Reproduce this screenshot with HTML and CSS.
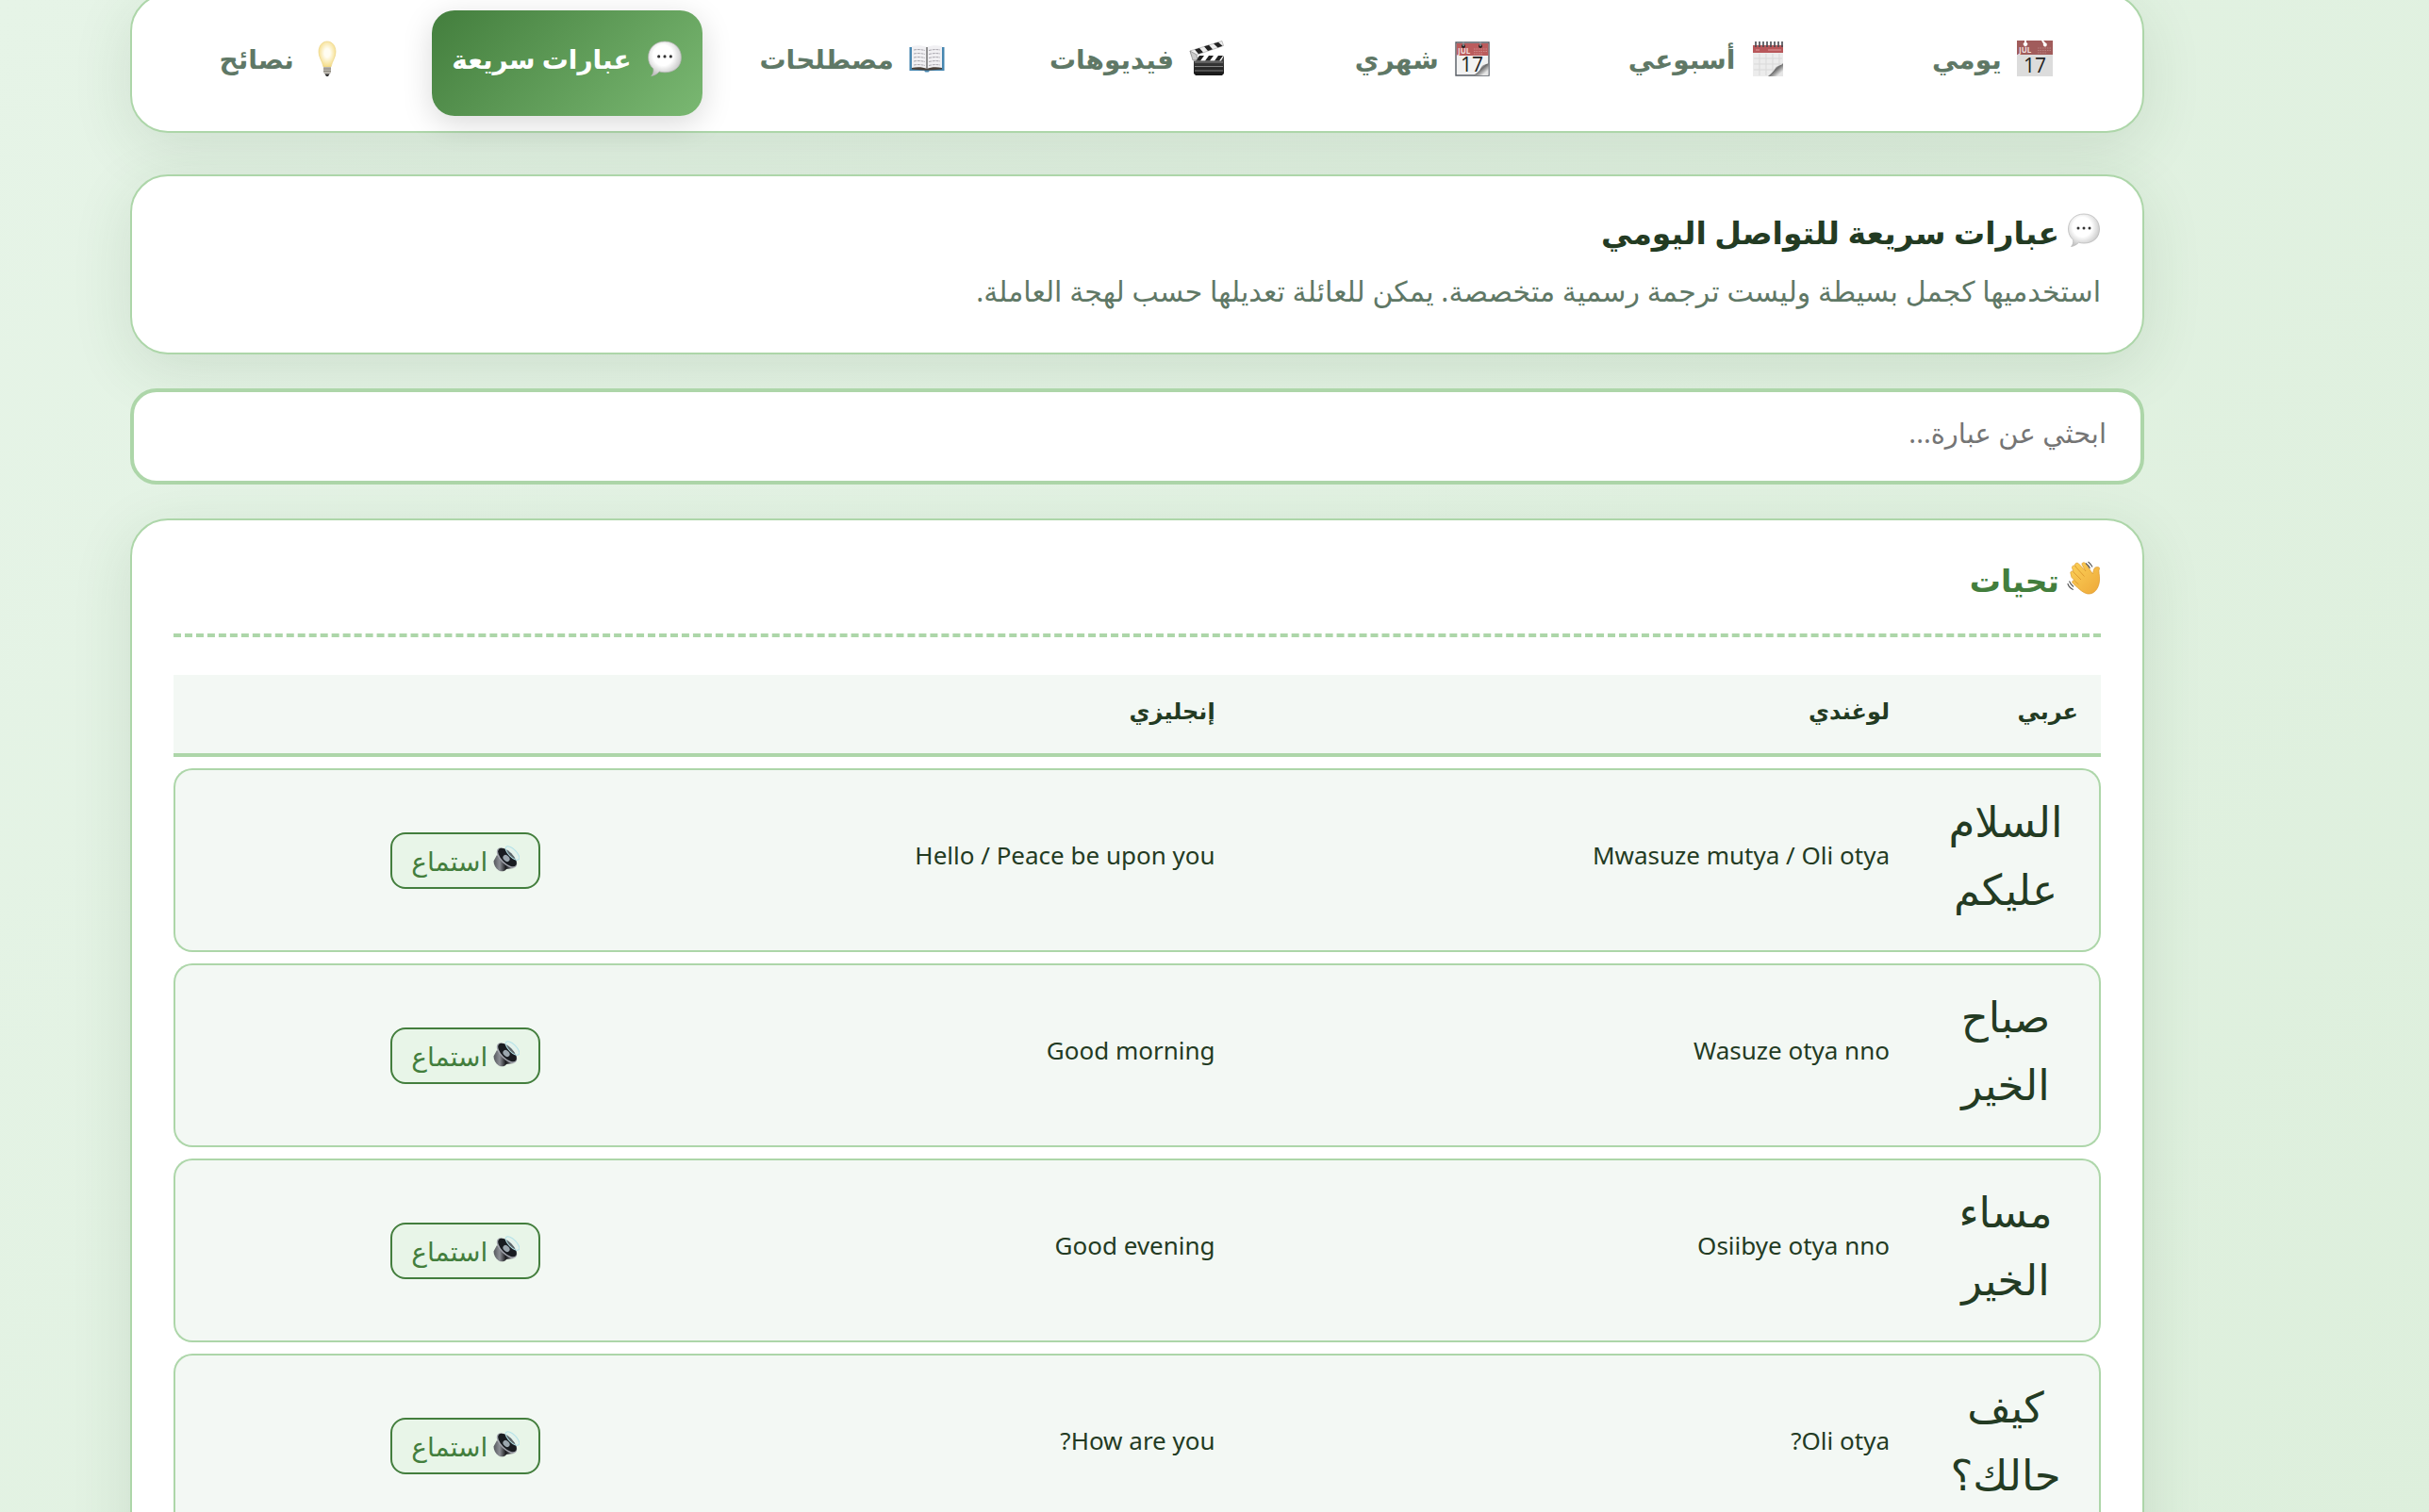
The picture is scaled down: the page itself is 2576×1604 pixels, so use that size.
FILE: index.html
```html
<!DOCTYPE html>
<html lang="ar" dir="rtl">
  <head>
    <meta charset="UTF-8" />
    <meta name="viewport" content="width=device-width, initial-scale=1.0" />
    <title>عبارات سريعة</title>
    <link rel="stylesheet" href="styles.css">
  </head>
  <body>
    <!-- Shared icons -->
    <svg class="sprite" aria-hidden="true">
      <defs>
        <radialGradient id="bubbleFill" cx="45%" cy="40%" r="60%">
          <stop offset="0.5" stop-color="#ffffff" />
          <stop offset="1" stop-color="#c4c4c4" />
        </radialGradient>
        <radialGradient id="bulbFill" cx="50%" cy="45%" r="55%">
          <stop offset="0.3" stop-color="#fffdf2" />
          <stop offset="1" stop-color="#f5dc85" />
        </radialGradient>
        <linearGradient id="handFill" x1="0" y1="0" x2="1" y2="1">
          <stop offset="0" stop-color="#fbd159" />
          <stop offset="1" stop-color="#eea838" />
        </linearGradient>
        <linearGradient id="curlFill" x1="0" y1="0" x2="1" y2="1">
          <stop offset="0.3" stop-color="#f4f4f4" />
          <stop offset="0.5" stop-color="#6c6c6c" />
          <stop offset="0.8" stop-color="#e6e6e6" />
        </linearGradient>
        <linearGradient id="boardFill" x1="0" y1="0" x2="0" y2="1">
          <stop offset="0" stop-color="#4a4a4a" />
          <stop offset="1" stop-color="#161616" />
        </linearGradient>
        <linearGradient id="magnetFill" x1="0" y1="0" x2="1" y2="0">
          <stop offset="0" stop-color="#55575d" />
          <stop offset="0.3" stop-color="#8d8f96" />
          <stop offset="0.6" stop-color="#1b1c1f" />
          <stop offset="1" stop-color="#8d8f96" />
        </linearGradient>

        <symbol id="icon-bubble" viewBox="0 0 36 36">
          <path d="M18 1C27.500 1 34.500 7.500 34.500 17S27.500 32 18 32c-2 0-3.800-.3-5.500-.8C11 33 7.500 35.300 4.500 35.500 6.500 33.500 7 31 6.500 28.300 3.300 25.500 1.500 21.600 1.500 17 1.500 7.500 8.500 1 18 1z" fill="url(#bubbleFill)" stroke="#b5b5b5" stroke-width="0.700" />
          <circle cx="12" cy="16" r="1.500" fill="#333" />
          <circle cx="18" cy="16" r="1.500" fill="#333" />
          <circle cx="24" cy="16" r="1.500" fill="#333" />
        </symbol>

        <symbol id="icon-day" viewBox="0 0 38 38">
          <path d="M0 0h38v38H0z" fill="#dcdcdc" />
          <path d="M0 0h38v15H0z" fill="#a15c5b" />
          <path d="M8 0h2v2a2.200 2.200 0 1 1-2 0zM26 0h2l2.500 2.500a2 2 0 1 1-2.500 1z" fill="#fff" />
          <path d="M22 8h14M22 10.500h14M22 13h10" stroke="#b98080" stroke-dasharray="1.500 1" fill="none" />
          <text x="2" y="13" class="cal-month">JUL</text>
          <text x="19" y="34" class="cal-date">17</text>
        </symbol>

        <symbol id="icon-week" viewBox="0 0 38 38">
          <path d="M3 5h32v21L24 38H3z" fill="#ececec" />
          <path d="M3 5h32v8H3z" fill="#b8575a" />
          <path d="M6 10h4M19 10h14" stroke="#d99" fill="none" />
          <path d="M10 14v23M17 14v23M24 14v20M31 14v14M4 19h30M4 25h30M4 31h24" stroke="#d9d9d9" fill="none" />
          <path d="M35 24c-2 3-6 2-8 5-2 4-5 6-8 9h16z" fill="url(#curlFill)" />
          <path d="M6 1v6M10 1v6M14 1v6M18 1v6M22 1v6M26 1v6M30 1v6M34 1v6" stroke="#47494f" stroke-width="1.600" fill="none" />
        </symbol>

        <symbol id="icon-month" viewBox="0 0 38 38">
          <path d="M2 2h35v35H2z" fill="#f2f2f2" stroke="#555b63" stroke-width="1.400" />
          <path d="M2.700 3h33.600v13H2.700z" fill="#bb5c5d" />
          <path d="M21 9h14M21 11.500h14M21 14h10" stroke="#d08a8a" stroke-dasharray="1.500 1" fill="none" />
          <path d="M36.500 24c-4 2-6 1-8 5-1.500 4-5 6-8 8h16z" fill="url(#curlFill)" />
          <text x="4" y="14" class="cal-month">JUL</text>
          <text x="19" y="33" class="cal-date">17</text>
          <circle cx="10" cy="6" r="2" fill="#222" />
          <circle cx="28" cy="6" r="2" fill="#222" />
          <path d="M10 1v5M28 1v5" stroke="#8b979c" stroke-width="1.500" />
        </symbol>

        <symbol id="icon-clapper" viewBox="0 0 38 38">
          <path d="M5 16h32v19l-2 2H7l-2-2z" fill="url(#boardFill)" />
          <path d="M6 23h30M6 27.500h30M6 32h30" stroke="#999" stroke-width="0.800" />
          <path d="M5 16h32l-3 5.500H5z" fill="#fff" />
          <path d="M11 16h5l-4 5.500H7zM21 16h5l-4 5.500h-5zM31 16h5l-4 5.500h-5z" fill="#222" />
          <path d="M1 11L35 0.500l1.500 5L3 17z" fill="#eee" stroke="#888" stroke-width="0.500" />
          <path d="M6 9.500l5-1.500 4 4.500-5 1.700zM16 6.300l5-1.500 4 4.500-5 1.600zM26 3.200l5-1.500 4.500 4-5 1.700z" fill="#222" />
          <path d="M1 11l7 4 1 5-5 1z" fill="#c9c9c9" stroke="#777" stroke-width="0.600" />
        </symbol>

        <symbol id="icon-book" viewBox="0 0 38 38">
          <path d="M0.500 7H37.500V32H22l-1.500 1.500h-3L16 32H0.500z" fill="#4686b0" />
          <path d="M3 28h32v2.500L22 31.500h-6L3 30.500z" fill="#4a4038" />
          <path d="M3 6c5-1.500 12-1 16 1 4-2 11-2.500 16-1v23c-5-1-12-1-16 1-4-2-11-2-16-1z" fill="#f1f0f3" />
          <path d="M19 7v23" stroke="#777" stroke-width="1.600" />
          <path d="M5 10c4-.8 8-.5 12 .5M5 14c4-.8 8-.5 12 .5M5 18c4-.8 8-.5 12 .5M5 22c4-.8 8-.5 12 .5M5 26c4-.8 8-.5 12 .5M21 10.500c4-1 8-1.300 12-.5M21 14.500c4-1 8-1.300 12-.5M21 18.500c4-1 8-1.300 12-.5M21 22.500c4-1 8-1.300 12-.5M21 26.500c4-1 8-1.300 12-.5" stroke="#a9a7ae" stroke-dasharray="3 0.800" fill="none" />
        </symbol>

        <symbol id="icon-bulb" viewBox="0 0 38 38">
          <path d="M19 1c5.500 0 9 4.800 9 11 0 6-3.500 9-5 16h-8C13.500 21 10 18 10 12 10 5.800 13.500 1 19 1z" fill="url(#bulbFill)" stroke="#ecd68a" stroke-width="0.700" />
          <path d="M15 28h8v6l-2 2h-4l-2-2z" fill="#b9b5ad" />
          <path d="M15 30h8M15 32.500h8" stroke="#807c74" stroke-width="0.800" />
          <path d="M16.500 35.500h5L20 38h-2z" fill="#333" />
        </symbol>

        <symbol id="icon-wave" viewBox="0 0 36 36">
          <path d="M4 13.500C3 11.500 5.500 10 7 11.500L5.500 7.500C5 5 8 4 9.500 6L8.500 4.500C8.500 2 11.500 1.500 13 3.500L20 11 16 4C15.500 1.500 18.500 1 20 3l7.500 11c.5-2.500.5-4.500 2-6.500 1.500-1.500 5.500-1 5 .5-1.500 3 .5 7 0 13C34 29 29 35.500 22.500 35 18 34.500 14 31 6.500 24 4.500 22 6.500 20 8.500 21L5 17.500z" fill="url(#handFill)" stroke="#dd9a2e" stroke-width="0.700" />
          <path d="M6.500 11.500L15 20M9 6l9.500 10.500M8.500 21.500l4 3.500" stroke="#d8922b" stroke-width="0.800" fill="none" />
          <path d="M20 2.500c2 1.500 3.500 3.500 4.500 5.500M22.500 1c2 1.500 3.500 3.500 4.500 5.500M.8 24c1 3 3.500 5.500 6 6.500M2.500 21.500c1 2.500 2.500 4.500 4.500 6" stroke="#555" stroke-width="1.100" fill="none" />
        </symbol>

        <symbol id="icon-speaker" viewBox="0 0 28 28">
          <path d="M4 10L22 24l-8 1c-1.500 2.500-5 3-8 1.500C2.500 24 .5 20 .5 16.500z" fill="url(#magnetFill)" />
          <ellipse cx="14.500" cy="13" rx="13.500" ry="6.800" transform="rotate(45 14.500 13)" fill="#a3a5ae" />
          <ellipse cx="15" cy="12.500" rx="12.500" ry="6" transform="rotate(45 15 12.500)" fill="#191c21" />
          <ellipse cx="14" cy="13.500" rx="4" ry="3" transform="rotate(45 14 13.500)" fill="#9ba6ae" />
          <ellipse cx="20.500" cy="8" rx="9.500" ry="4" transform="rotate(45 20.500 8)" fill="#d9eff2" fill-opacity="0.350" stroke="#b5e2e8" stroke-width="1" />
        </symbol>
      </defs>
    </svg>

    <main class="container">
      <nav class="tabs">
        <button class="tab" type="button"><svg class="tab-icon"><use href="#icon-day" /></svg>يومي</button>
        <button class="tab" type="button"><svg class="tab-icon"><use href="#icon-week" /></svg>أسبوعي</button>
        <button class="tab" type="button"><svg class="tab-icon"><use href="#icon-month" /></svg>شهري</button>
        <button class="tab" type="button"><svg class="tab-icon"><use href="#icon-clapper" /></svg>فيديوهات</button>
        <button class="tab" type="button"><svg class="tab-icon"><use href="#icon-book" /></svg>مصطلحات</button>
        <button class="tab active" type="button"><svg class="tab-icon"><use href="#icon-bubble" /></svg>عبارات سريعة</button>
        <button class="tab" type="button"><svg class="tab-icon"><use href="#icon-bulb" /></svg>نصائح</button>
      </nav>

      <section class="card intro">
        <h2><svg class="title-icon"><use href="#icon-bubble" /></svg>عبارات سريعة للتواصل اليومي</h2>
        <p>استخدميها كجمل بسيطة وليست ترجمة رسمية متخصصة. يمكن للعائلة تعديلها حسب لهجة العاملة.</p>
      </section>

      <input class="search" type="text" placeholder="ابحثي عن عبارة..." aria-label="ابحثي عن عبارة" />

      <section class="card phrases">
        <h3><svg class="title-icon"><use href="#icon-wave" /></svg>تحيات</h3>
        <table>
          <thead>
            <tr>
              <th class="col-arabic">عربي</th>
              <th class="col-luganda">لوغندي</th>
              <th class="col-english">إنجليزي</th>
              <th class="col-listen"></th>
            </tr>
          </thead>
          <tbody>
            <tr>
              <td class="arabic">السلام عليكم</td>
              <td>Mwasuze mutya / Oli otya</td>
              <td>Hello / Peace be upon you</td>
              <td class="listen"><button class="listen-btn" type="button"><svg class="listen-icon"><use href="#icon-speaker" /></svg>استماع</button></td>
            </tr>
            <tr>
              <td class="arabic">صباح الخير</td>
              <td>Wasuze otya nno</td>
              <td>Good morning</td>
              <td class="listen"><button class="listen-btn" type="button"><svg class="listen-icon"><use href="#icon-speaker" /></svg>استماع</button></td>
            </tr>
            <tr>
              <td class="arabic">مساء الخير</td>
              <td>Osiibye otya nno</td>
              <td>Good evening</td>
              <td class="listen"><button class="listen-btn" type="button"><svg class="listen-icon"><use href="#icon-speaker" /></svg>استماع</button></td>
            </tr>
            <tr>
              <td class="arabic">كيف حالك؟</td>
              <td>Oli otya?</td>
              <td>How are you?</td>
              <td class="listen"><button class="listen-btn" type="button"><svg class="listen-icon"><use href="#icon-speaker" /></svg>استماع</button></td>
            </tr>
          </tbody>
        </table>
      </section>
    </main>
  </body>
</html>
```

FILE: styles.css
```css
:root {
  --green: #437e3d;
  --green-light: #7ab872;
  --border: #add6a9;
  --text: #233b23;
  --muted: #5f7866;
  --row: #f3f8f4;
  --shadow: 0 16px 64px rgba(45, 80, 45, 0.12);
}

* {
  box-sizing: border-box;
}

body {
  margin: 0;
  min-height: 100vh;
  background: linear-gradient(135deg, #e6f4e7, #ddefdc);
  color: var(--text);
  font-family: 'Noto Sans', 'DejaVu Sans', sans-serif;
  overflow-x: hidden;
}

button,
input {
  font-family: inherit;
}

.sprite {
  position: absolute;
  width: 0;
  height: 0;
}

.container {
  display: flex;
  flex-direction: column;
  gap: 36px;
  margin: -7px 302px 0 138px;
}

/* Tabs */
.tabs {
  display: grid;
  grid-template-columns: repeat(7, 1fr);
  gap: 16px;
  margin-bottom: 8px;
  padding: 16px;
  background: white;
  border: 2px solid var(--border);
  border-radius: 40px;
  box-shadow: var(--shadow);
}

.tab {
  display: flex;
  align-items: center;
  justify-content: center;
  gap: 16px;
  height: 112px;
  padding: 0 8px 10px;
  border: none;
  border-radius: 24px;
  background: none;
  color: var(--muted);
  font-size: 28px;
  font-weight: bold;
  white-space: nowrap;
  cursor: pointer;
}

.tab.active {
  background: linear-gradient(135deg, var(--green), var(--green-light));
  color: white;
  box-shadow: 0 8px 32px rgba(0, 0, 0, 0.15);
}

.tab-icon {
  flex: none;
  width: 38px;
  height: 38px;
}

.cal-month {
  font-size: 8px;
  font-weight: bold;
  direction: ltr;
  fill: #f0dede;
}

.cal-date {
  font-family: 'Open Sans', sans-serif;
  font-size: 21px;
  font-weight: normal;
  text-anchor: middle;
  direction: ltr;
  fill: #222;
}

/* Cards */
.card {
  padding: 36px 44px;
  background: white;
  border: 2px solid var(--border);
  border-radius: 40px;
  box-shadow: var(--shadow);
}

.title-icon {
  flex: none;
  width: 36px;
  height: 36px;
  margin-bottom: 6px;
}

.intro h2,
.phrases h3 {
  display: flex;
  align-items: center;
  gap: 8px;
  margin: 0;
  font-size: 33px;
  line-height: 48px;
}

.intro p {
  margin: 14px 0 5px;
  color: var(--muted);
  font-size: 30px;
  line-height: 48px;
}

.search {
  width: 100%;
  height: 102px;
  padding: 0 36px 10px;
  border: 4px solid var(--border);
  border-radius: 28px;
  background: white;
  font-size: 29px;
  outline: none;
}

.search::placeholder {
  color: #757575;
  opacity: 1;
}

/* Phrases table */
.phrases h3 {
  padding: 4px 0 32px;
  border-bottom: 4px dashed var(--border);
  color: var(--green);
}

table {
  width: 100%;
  margin-top: 28px;
  border-collapse: separate;
  border-spacing: 0 12px;
  table-layout: fixed;
}

th,
td {
  padding: 18px 24px 29px;
  background: var(--row);
  font-size: 26px;
  line-height: 36px;
  text-align: right;
}

th {
  padding: 20px 24px 27px;
  border-bottom: 4px solid var(--border);
  font-size: 24px;
}

.col-arabic {
  width: 200px;
}

.col-luganda {
  width: 35%;
}

.col-english {
  width: 25%;
}

td {
  border-top: 2px solid var(--border);
  border-bottom: 2px solid var(--border);
}

td:first-child {
  border-right: 2px solid var(--border);
  border-radius: 0 20px 20px 0;
}

td:last-child {
  border-left: 2px solid var(--border);
  border-radius: 20px 0 0 20px;
}

td.arabic {
  font-size: 45px;
  line-height: 72px;
  text-align: center;
}

td.listen {
  padding: 24px;
  text-align: center;
}

.listen-btn {
  display: inline-flex;
  align-items: center;
  justify-content: center;
  gap: 6px;
  height: 60px;
  padding: 0 20px;
  border: 2px solid var(--green);
  border-radius: 16px;
  background: #e8f5e8;
  color: var(--green);
  font-size: 28px;
  cursor: pointer;
}

.listen-icon {
  flex: none;
  width: 28px;
  height: 28px;
  margin-bottom: 4px;
}
```
